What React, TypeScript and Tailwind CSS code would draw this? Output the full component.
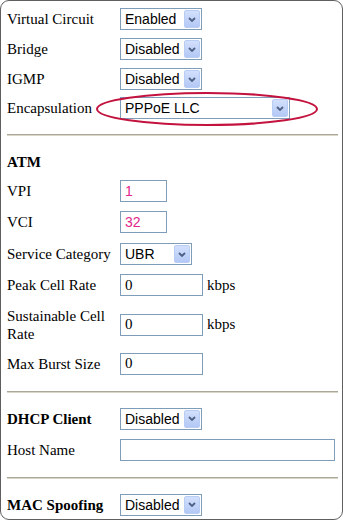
import React from "react";

function Select({ value, w }: { value: string; w: string }) {
  return (
    <div
      className={
        "relative flex h-[22px] items-center border border-[#7f9db9] bg-white " + w
      }
    >
      <span className="pl-[4px] font-['Liberation_Sans',Arial,sans-serif] text-[14px] leading-none text-black">
        {value}
      </span>
      <div className="absolute right-[1px] top-[1px] bottom-[1px] flex w-[16px] items-center justify-center rounded-[2px] border border-[#b8cdf6] bg-gradient-to-b from-[#d3e0fc] to-[#b3c8f5]">
        <svg width="8" height="5" viewBox="0 0 8 5">
          <path d="M1 1 L4 4 L7 1" stroke="#4d6185" strokeWidth="1.8" fill="none" />
        </svg>
      </div>
    </div>
  );
}

function Input({ value, w, pink }: { value?: string; w: string; pink?: boolean }) {
  return (
    <div
      className={
        "flex h-[22px] items-center border border-[#7f9db9] bg-white pl-[4px] " + w
      }
    >
      {value !== undefined &&
        (pink ? (
          <span className="font-['Liberation_Sans',Arial,sans-serif] text-[14px] leading-none text-[#e2268a]">
            {value}
          </span>
        ) : (
          <span className="font-['Liberation_Serif','Times_New_Roman',serif] text-[15px] leading-none text-black">
            {value}
          </span>
        ))}
    </div>
  );
}

function Row({
  label,
  bold,
  children,
  className,
}: {
  label: string;
  bold?: boolean;
  children?: React.ReactNode;
  className: string;
}) {
  return (
    <div className={"flex min-h-[22px] items-center " + className}>
      <div
        className={
          "w-[113px] shrink-0 pr-[6px] font-['Liberation_Serif','Times_New_Roman',serif] text-[15px] leading-[18px] text-black " +
          (bold ? "font-bold" : "")
        }
      >
        {label}
      </div>
      {children}
    </div>
  );
}

function Divider({ className }: { className: string }) {
  return (
    <div className={"mr-[5px] " + className}>
      <div className="h-[1px] bg-[#aca899]" />
      <div className="h-[1px] bg-[#d9d5c8]" />
    </div>
  );
}

function Kbps() {
  return (
    <span className="ml-[4px] font-['Liberation_Serif','Times_New_Roman',serif] text-[15px] text-black">
      kbps
    </span>
  );
}

export default function App() {
  return (
    <div className="relative h-[520px] w-[343px] overflow-hidden bg-white">
      <div className="absolute inset-0 rounded-[9px] border border-[#5f5f5f]" />
      <div className="relative flex flex-col pl-[7px] pt-[8px]">
        <Row label="Virtual Circuit" className="mt-0">
          <Select value="Enabled" w="w-[82px]" />
        </Row>
        <Row label="Bridge" className="mt-[8px]">
          <Select value="Disabled" w="w-[82px]" />
        </Row>
        <Row label="IGMP" className="mt-[8px]">
          <Select value="Disabled" w="w-[82px]" />
        </Row>
        <Row label="Encapsulation" className="mt-[7px]">
          <Select value="PPPoE LLC" w="w-[170px]" />
        </Row>
        <Divider className="mt-[15px]" />
        <Row label="ATM" bold className="mt-[15px]" />
        <Row label="VPI" className="mt-[7px]">
          <Input value="1" w="w-[47px]" pink />
        </Row>
        <Row label="VCI" className="mt-[9px]">
          <Input value="32" w="w-[47px]" pink />
        </Row>
        <Row label="Service Category" className="mt-[10px]">
          <Select value="UBR" w="w-[72px]" />
        </Row>
        <Row label="Peak Cell Rate" className="mt-[9px]">
          <Input value="0" w="w-[83px]" />
          <Kbps />
        </Row>
        <Row label="Sustainable Cell Rate" className="mt-[10px] min-h-[36px]">
          <Input value="0" w="w-[83px]" />
          <Kbps />
        </Row>
        <Row label="Max Burst Size" className="mt-[10px]">
          <Input value="0" w="w-[83px]" />
        </Row>
        <Divider className="mt-[16px]" />
        <Row label="DHCP Client" bold className="mt-[15px]">
          <Select value="Disabled" w="w-[82px]" />
        </Row>
        <Row label="Host Name" className="mt-[9px]">
          <Input w="w-[215px]" />
        </Row>
        <Divider className="mt-[16px]" />
        <Row label="MAC Spoofing" bold className="mt-[15px]">
          <Select value="Disabled" w="w-[82px]" />
        </Row>
      </div>
      <svg
        className="pointer-events-none absolute left-0 top-0"
        width="343"
        height="520"
      >
        <ellipse
          cx="207"
          cy="109"
          rx="110"
          ry="16"
          fill="none"
          stroke="#c3123e"
          strokeWidth="2"
        />
      </svg>
    </div>
  );
}
